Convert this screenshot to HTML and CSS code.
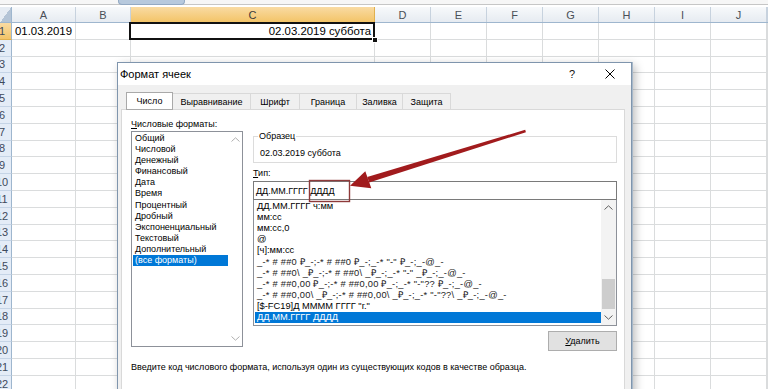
FILE: index.html
```html
<!DOCTYPE html>
<html lang="ru">
<head>
<meta charset="utf-8">
<title>Формат ячеек</title>
<link rel="stylesheet" href="styles.css">
</head>
<body>
<div class="app">
  <div class="topstrip"><div class="topstrip-tab"></div></div>
  <div class="sheet">
    <div class="hdr-row">
      <div class="corner"></div>
      <div class="colh">A</div><div class="colh">B</div><div class="colh sel">C</div><div class="colh">D</div><div class="colh">E</div><div class="colh">F</div><div class="colh">G</div><div class="colh">H</div><div class="colh">I</div><div class="colh">J</div><div class="colh"></div>
    </div>
    <div class="row"><div class="rowh sel"><span>1</span></div><div class="cell txt">01.03.2019</div><div class="cell"></div><div class="cell txt right active">02.03.2019 суббота<span class="handle"></span></div><div class="cell"></div><div class="cell"></div><div class="cell"></div><div class="cell"></div><div class="cell"></div><div class="cell"></div><div class="cell"></div><div class="cell"></div></div>
    <div class="row"><div class="rowh"><span>2</span></div><div class="cell"></div><div class="cell"></div><div class="cell"></div><div class="cell"></div><div class="cell"></div><div class="cell"></div><div class="cell"></div><div class="cell"></div><div class="cell"></div><div class="cell"></div><div class="cell"></div></div>
    <div class="row"><div class="rowh"><span>3</span></div><div class="cell"></div><div class="cell"></div><div class="cell"></div><div class="cell"></div><div class="cell"></div><div class="cell"></div><div class="cell"></div><div class="cell"></div><div class="cell"></div><div class="cell"></div><div class="cell"></div></div>
    <div class="row"><div class="rowh"><span>4</span></div><div class="cell"></div><div class="cell"></div><div class="cell"></div><div class="cell"></div><div class="cell"></div><div class="cell"></div><div class="cell"></div><div class="cell"></div><div class="cell"></div><div class="cell"></div><div class="cell"></div></div>
    <div class="row"><div class="rowh"><span>5</span></div><div class="cell"></div><div class="cell"></div><div class="cell"></div><div class="cell"></div><div class="cell"></div><div class="cell"></div><div class="cell"></div><div class="cell"></div><div class="cell"></div><div class="cell"></div><div class="cell"></div></div>
    <div class="row"><div class="rowh"><span>6</span></div><div class="cell"></div><div class="cell"></div><div class="cell"></div><div class="cell"></div><div class="cell"></div><div class="cell"></div><div class="cell"></div><div class="cell"></div><div class="cell"></div><div class="cell"></div><div class="cell"></div></div>
    <div class="row"><div class="rowh"><span>7</span></div><div class="cell"></div><div class="cell"></div><div class="cell"></div><div class="cell"></div><div class="cell"></div><div class="cell"></div><div class="cell"></div><div class="cell"></div><div class="cell"></div><div class="cell"></div><div class="cell"></div></div>
    <div class="row"><div class="rowh"><span>8</span></div><div class="cell"></div><div class="cell"></div><div class="cell"></div><div class="cell"></div><div class="cell"></div><div class="cell"></div><div class="cell"></div><div class="cell"></div><div class="cell"></div><div class="cell"></div><div class="cell"></div></div>
    <div class="row"><div class="rowh"><span>9</span></div><div class="cell"></div><div class="cell"></div><div class="cell"></div><div class="cell"></div><div class="cell"></div><div class="cell"></div><div class="cell"></div><div class="cell"></div><div class="cell"></div><div class="cell"></div><div class="cell"></div></div>
    <div class="row"><div class="rowh"><span>10</span></div><div class="cell"></div><div class="cell"></div><div class="cell"></div><div class="cell"></div><div class="cell"></div><div class="cell"></div><div class="cell"></div><div class="cell"></div><div class="cell"></div><div class="cell"></div><div class="cell"></div></div>
    <div class="row"><div class="rowh"><span>11</span></div><div class="cell"></div><div class="cell"></div><div class="cell"></div><div class="cell"></div><div class="cell"></div><div class="cell"></div><div class="cell"></div><div class="cell"></div><div class="cell"></div><div class="cell"></div><div class="cell"></div></div>
    <div class="row"><div class="rowh"><span>12</span></div><div class="cell"></div><div class="cell"></div><div class="cell"></div><div class="cell"></div><div class="cell"></div><div class="cell"></div><div class="cell"></div><div class="cell"></div><div class="cell"></div><div class="cell"></div><div class="cell"></div></div>
    <div class="row"><div class="rowh"><span>13</span></div><div class="cell"></div><div class="cell"></div><div class="cell"></div><div class="cell"></div><div class="cell"></div><div class="cell"></div><div class="cell"></div><div class="cell"></div><div class="cell"></div><div class="cell"></div><div class="cell"></div></div>
    <div class="row"><div class="rowh"><span>14</span></div><div class="cell"></div><div class="cell"></div><div class="cell"></div><div class="cell"></div><div class="cell"></div><div class="cell"></div><div class="cell"></div><div class="cell"></div><div class="cell"></div><div class="cell"></div><div class="cell"></div></div>
    <div class="row"><div class="rowh"><span>15</span></div><div class="cell"></div><div class="cell"></div><div class="cell"></div><div class="cell"></div><div class="cell"></div><div class="cell"></div><div class="cell"></div><div class="cell"></div><div class="cell"></div><div class="cell"></div><div class="cell"></div></div>
    <div class="row"><div class="rowh"><span>16</span></div><div class="cell"></div><div class="cell"></div><div class="cell"></div><div class="cell"></div><div class="cell"></div><div class="cell"></div><div class="cell"></div><div class="cell"></div><div class="cell"></div><div class="cell"></div><div class="cell"></div></div>
    <div class="row"><div class="rowh"><span>17</span></div><div class="cell"></div><div class="cell"></div><div class="cell"></div><div class="cell"></div><div class="cell"></div><div class="cell"></div><div class="cell"></div><div class="cell"></div><div class="cell"></div><div class="cell"></div><div class="cell"></div></div>
    <div class="row"><div class="rowh"><span>18</span></div><div class="cell"></div><div class="cell"></div><div class="cell"></div><div class="cell"></div><div class="cell"></div><div class="cell"></div><div class="cell"></div><div class="cell"></div><div class="cell"></div><div class="cell"></div><div class="cell"></div></div>
    <div class="row"><div class="rowh"><span>19</span></div><div class="cell"></div><div class="cell"></div><div class="cell"></div><div class="cell"></div><div class="cell"></div><div class="cell"></div><div class="cell"></div><div class="cell"></div><div class="cell"></div><div class="cell"></div><div class="cell"></div></div>
    <div class="row"><div class="rowh"><span>20</span></div><div class="cell"></div><div class="cell"></div><div class="cell"></div><div class="cell"></div><div class="cell"></div><div class="cell"></div><div class="cell"></div><div class="cell"></div><div class="cell"></div><div class="cell"></div><div class="cell"></div></div>
    <div class="row"><div class="rowh"><span>21</span></div><div class="cell"></div><div class="cell"></div><div class="cell"></div><div class="cell"></div><div class="cell"></div><div class="cell"></div><div class="cell"></div><div class="cell"></div><div class="cell"></div><div class="cell"></div><div class="cell"></div></div>
    <div class="row"><div class="rowh"><span>22</span></div><div class="cell"></div><div class="cell"></div><div class="cell"></div><div class="cell"></div><div class="cell"></div><div class="cell"></div><div class="cell"></div><div class="cell"></div><div class="cell"></div><div class="cell"></div><div class="cell"></div></div>
  </div>

  <div class="dialog">
    <div class="titlebar">
      <span class="title">Формат ячеек</span>
      <span class="help">?</span>
      <svg class="close" viewBox="0 0 10 10" width="10" height="10"><path d="M0.5 0.5L9.5 9.5M9.5 0.5L0.5 9.5" stroke="#000" stroke-width="1" fill="none"/></svg>
    </div>
    <div class="tabs">
      <div class="tab active">Число</div>
      <div class="tab">Выравнивание</div>
      <div class="tab">Шрифт</div>
      <div class="tab">Граница</div>
      <div class="tab">Заливка</div>
      <div class="tab">Защита</div>
    </div>
    <div class="panel">
      <div class="cols">
        <div class="leftcol">
          <div class="lbl"><u>Ч</u>исловые форматы:</div>
          <div class="listbox cats">
            <ul class="items">
              <li>Общий</li>
              <li>Числовой</li>
              <li>Денежный</li>
              <li>Финансовый</li>
              <li>Дата</li>
              <li>Время</li>
              <li>Процентный</li>
              <li>Дробный</li>
              <li>Экспоненциальный</li>
              <li>Текстовый</li>
              <li>Дополнительный</li>
              <li class="selected">(все форматы)</li>
            </ul>
            <div class="vscroll disabled">
              <svg class="arrow" viewBox="0 0 9 5" width="9" height="5"><path d="M0.5 4.5L4.5 0.8L8.5 4.5" fill="none" stroke="currentColor"/></svg>
              <div class="track"></div>
              <svg class="arrow" viewBox="0 0 9 5" width="9" height="5"><path d="M0.5 0.5L4.5 4.2L8.5 0.5" fill="none" stroke="currentColor"/></svg>
            </div>
          </div>
        </div>
        <div class="rightcol">
          <fieldset class="sample">
            <legend>Образец</legend>
            <div class="sample-text">02.03.2019 суббота</div>
          </fieldset>
          <div class="lbl type-lbl"><u>Т</u>ип:</div>
          <div class="input">ДД.ММ.ГГГГ ДДДД</div>
          <div class="listbox types">
            <ul class="items">
              <li>ДД.ММ.ГГГГ ч:мм</li>
              <li>мм:сс</li>
              <li>мм:сс,0</li>
              <li>@</li>
              <li>[ч]:мм:сс</li>
              <li class="code">_-* # ##0 ₽_-;-* # ##0 ₽_-;_-* "-" ₽_-;_-@_-</li>
              <li class="code">_-* # ##0\ _₽_-;-* # ##0\ _₽_-;_-* "-" _₽_-;_-@_-</li>
              <li class="code">_-* # ##0,00 ₽_-;-* # ##0,00 ₽_-;_-* "-"?? ₽_-;_-@_-</li>
              <li class="code">_-* # ##0,00\ _₽_-;-* # ##0,00\ _₽_-;_-* "-"??\ _₽_-;_-@_-</li>
              <li>[$-FC19]Д ММММ ГГГГ "г."</li>
              <li class="selected">ДД.ММ.ГГГГ ДДДД</li>
            </ul>
            <div class="vscroll">
              <svg class="arrow" viewBox="0 0 9 5" width="9" height="5"><path d="M0.5 4.5L4.5 0.8L8.5 4.5" fill="none" stroke="currentColor"/></svg>
              <div class="track"><div class="thumb"></div></div>
              <svg class="arrow" viewBox="0 0 9 5" width="9" height="5"><path d="M0.5 0.5L4.5 4.2L8.5 0.5" fill="none" stroke="currentColor"/></svg>
            </div>
          </div>
          <div class="btnrow"><button class="btn"><u>У</u>далить</button></div>
        </div>
      </div>
      <p class="hint">Введите код числового формата, используя один из существующих кодов в качестве образца.</p>
    </div>
  </div>

  <svg class="annot" width="768" height="389" viewBox="0 0 768 389">
    <rect x="309.5" y="180.5" width="40" height="21" fill="none" stroke="#8e3a3a" stroke-width="1.4"/>
    <polygon points="525.2,129.8 525.9,132.2 369.2,182.6 367.2,177.0" fill="#a11b1d"/>
    <polygon points="350,185.8 365.3,171.2 371.3,188.2" fill="#a11b1d"/>
  </svg>
</div>
</body>
</html>
```

FILE: styles.css
```css
* { box-sizing: border-box; }

html, body {
  margin: 0;
  padding: 0;
}

body {
  width: 768px;
  height: 389px;
  overflow: hidden;
  background: #ffffff;
  font-family: "Liberation Sans", Arial, sans-serif;
  color: #000;
}

.app {
  position: relative;
  width: 768px;
  height: 389px;
  overflow: hidden;
}

/* ---------- top strip ---------- */
.topstrip {
  height: 7px;
  display: flex;
  align-items: flex-start;
  background: linear-gradient(#f6f6f6 0, #f6f6f6 4px, #c6c6c6 4px, #c6c6c6 5px, #ffffff 5px);
}

.topstrip-tab {
  margin-left: 118px;
  width: 67px;
  height: 5px;
  background: #b7c9dd;
  border: 1px solid #93a9c3;
  border-top: 0;
  border-radius: 0 0 4px 4px;
}

/* ---------- sheet ---------- */
.sheet {
  --cols: 12px 64px 55px 244px repeat(7, 56px) 1fr;
  display: flex;
  flex-direction: column;
}

.hdr-row {
  display: grid;
  grid-template-columns: var(--cols);
  height: 16px;
  background: linear-gradient(#f7f9fb, #e6ebf1);
  border-bottom: 1px solid #9eb6ce;
}

.corner {
  background: linear-gradient(to bottom right, #e6ecf3 52%, #b4c4d6 52%);
  border-right: 1px solid #9eb6ce;
}

.colh {
  border-right: 1px solid #c7d2de;
  display: flex;
  align-items: center;
  justify-content: center;
  font-size: 11px;
  color: #4a4f57;
}

.colh.sel {
  background: linear-gradient(#f9dba3, #f3c468);
  border-right-color: #e0b04f;
  color: #3c3c3c;
}

.row {
  display: grid;
  grid-template-columns: var(--cols);
  height: 16.8px;
}

.rowh {
  display: flex;
  align-items: center;
  overflow: hidden;
  background: #e4ecf7;
  border-right: 1px solid #9eb6ce;
  border-bottom: 1px solid #c5d4e6;
  font-size: 11px;
  color: #3e4a5c;
}

.rowh span {
  flex: none;
  width: 20px;
  margin-left: -8px;
  text-align: center;
}

.rowh.sel {
  background: linear-gradient(#f9dba3, #f3c468);
  border-bottom-color: #e0b04f;
}

.cell {
  border-right: 1px solid #dadcdd;
  border-bottom: 1px solid #dadcdd;
  min-width: 0;
}

.cell.txt {
  display: flex;
  align-items: center;
  padding: 0 3px;
  font-size: 11.4px;
  white-space: nowrap;
}

.cell.right {
  justify-content: flex-end;
}

.cell.active {
  position: relative;
}

.cell.active::after {
  content: "";
  position: absolute;
  left: -2px;
  top: -1px;
  right: -1px;
  bottom: -1px;
  border: 2px solid #111;
}

.handle {
  position: absolute;
  right: -4px;
  bottom: -4px;
  width: 6px;
  height: 6px;
  background: #111;
  border: 1px solid #fff;
  z-index: 1;
}

/* ---------- dialog ---------- */
.dialog {
  position: absolute;
  left: 117px;
  top: 62px;
  width: 515px;
  height: 340px;
  display: flex;
  flex-direction: column;
  background: #f0f0f0;
  border: 1px solid #7f95ad;
  box-shadow: 1px 0 0 #a7b8c9, 3px 3px 9px rgba(0, 0, 0, 0.28);
  font-size: 9px;
  color: #000;
  z-index: 2;
}

.titlebar {
  height: 22px;
  flex: none;
  display: flex;
  align-items: center;
  padding-left: 2px;
  background: #ffffff;
}

.title {
  flex: 1;
  font-size: 11px;
}

.help {
  font-size: 11px;
  margin-right: 30px;
  color: #111;
}

.close {
  margin-right: 16px;
  display: block;
}

.tabs {
  height: 24px;
  flex: none;
  display: flex;
  align-items: flex-end;
  padding-left: 8px;
  position: relative;
  z-index: 1;
}

.tab {
  flex: none;
  height: 16px;
  display: flex;
  align-items: center;
  justify-content: center;
  border: 1px solid #d9d9d9;
  border-bottom: 0;
  border-left: 0;
  background: #f0f0f0;
  white-space: nowrap;
}

.tab:nth-child(1) { width: 47px; }
.tab:nth-child(2) { width: 78px; }
.tab:nth-child(3) { width: 49px; }
.tab:nth-child(4) { width: 57px; }
.tab:nth-child(5) { width: 46px; }
.tab:nth-child(6) { width: 48px; }

.tab.active {
  height: 18px;
  margin-bottom: -1px;
  border: 1px solid #a9a9a9;
  background: #ffffff;
}

.panel {
  flex: 1;
  margin: 0 6px 0 3px;
  padding: 8px 7px 0 9px;
  background: #ffffff;
  border: 1px solid #d9d9d9;
}

.cols {
  display: flex;
  gap: 10px;
  align-items: flex-start;
}

.leftcol {
  width: 112px;
  flex: none;
  display: flex;
  flex-direction: column;
}

.rightcol {
  flex: 1;
  display: flex;
  flex-direction: column;
}

.lbl {
  height: 13px;
  line-height: 12px;
  white-space: nowrap;
}

.lbl u, .btn u {
  text-decoration-thickness: 1px;
  text-underline-offset: 1px;
}

.listbox {
  display: flex;
  background: #ffffff;
  border: 1px solid #8d9199;
}

.cats {
  height: 216px;
}

.types {
  height: 127px;
  margin-top: -1px;
}

.items {
  flex: 1;
  min-width: 0;
  margin: 0;
  padding: 1px 0 0 1px;
  list-style: none;
  overflow: hidden;
}

.items li {
  height: 11.1px;
  line-height: 11.1px;
  padding-left: 2px;
  white-space: nowrap;
}

.types .items li {
  font-size: 9.3px;
}

.types .items li.code {
  letter-spacing: 0.25px;
  color: #222;
}

.items li.selected {
  background: #0078d7;
  color: #ffffff;
}

.vscroll {
  width: 15px;
  flex: none;
  display: flex;
  flex-direction: column;
  align-items: center;
  background: #f3f3f3;
  color: #606060;
}

.vscroll.disabled {
  width: 14px;
  background: #ffffff;
  color: #b0b0b0;
}

.arrow {
  display: block;
  margin: 5px 0;
}

.track {
  flex: 1;
  align-self: stretch;
  display: flex;
  flex-direction: column;
  justify-content: flex-end;
}

.thumb {
  height: 30px;
  margin: 0 1px 1px;
  background: #cdcdcd;
}

.sample {
  margin: 13px 0 0;
  padding: 6px 6px 3px;
  border: 1px solid #dcdcdc;
  min-width: 0;
}

.sample legend {
  padding: 0 1px;
  margin-left: -2px;
  line-height: 11px;
}

.sample-text {
  line-height: 11.1px;
}

.type-lbl {
  margin-top: 4px;
}

.input {
  margin-top: 1px;
  height: 19px;
  padding-left: 2px;
  display: flex;
  align-items: center;
  border: 1px solid #7a7a7a;
  background: #ffffff;
  white-space: nowrap;
  position: relative;
  z-index: 1;
}

.btnrow {
  display: flex;
  justify-content: flex-end;
  margin-top: 5px;
}

.btn {
  width: 69px;
  height: 20px;
  padding: 0;
  font: inherit;
  color: #000;
  background: #e1e1e1;
  border: 1px solid #adadad;
}

.hint {
  margin: 10px 0 0;
  line-height: 12px;
  white-space: nowrap;
}

/* ---------- annotation ---------- */
.annot {
  position: absolute;
  left: 0;
  top: 0;
  z-index: 3;
  pointer-events: none;
}
```
